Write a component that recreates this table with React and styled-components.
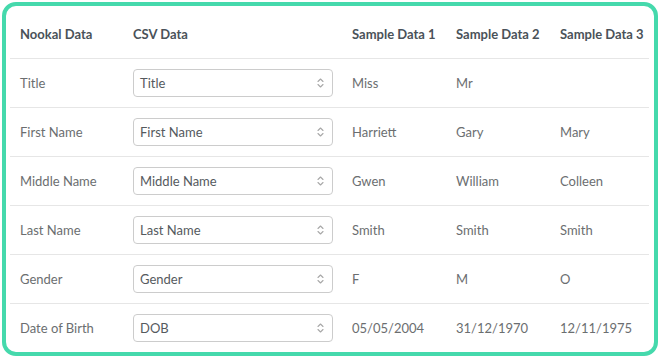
import React from "react";
import styled, { createGlobalStyle } from "styled-components";

const Global = createGlobalStyle`
  html, body { margin: 0; padding: 0; background: #ffffff; }
  body { font-family: Lato, "Open Sans", sans-serif; }
`;

const Page = styled.div`
  padding: 2px;
  width: 662px;
  height: 360px;
  box-sizing: border-box;
`;

const Card = styled.div`
  width: 656px;
  height: 354px;
  box-sizing: border-box;
  border: 4px solid #45d9ac;
  border-radius: 14px;
  padding: 4px 5px 0 4px;
  background: #fff;
  overflow: hidden;
`;

const Table = styled.table`
  width: 639px;
  border-collapse: collapse;
  table-layout: fixed;
  font-size: 13px;
`;

const Th = styled.th`
  height: 48px;
  padding: 0 10px;
  text-align: left;
  font-weight: 700;
  color: #4a5259;
  border-bottom: 1px solid #e6e6e6;
  white-space: nowrap;
`;

const Row = styled.tr`
  & > td {
    border-bottom: 1px solid #e6e6e6;
  }
  &:last-child > td {
    border-bottom: none;
  }
`;

const Td = styled.td`
  height: 48px;
  padding: 0 10px;
  color: #6b6e70;
  white-space: nowrap;
  vertical-align: middle;
`;

const SelectBox = styled.div`
  width: 200px;
  height: 28px;
  box-sizing: border-box;
  border: 1px solid #cccccc;
  border-radius: 4px;
  display: flex;
  align-items: center;
  justify-content: space-between;
  padding: 0 8px 0 6px;
  color: #555a5e;
  font-size: 13px;
  background: #fff;
`;

const Chevrons = () => (
  <svg width="7" height="10" viewBox="0 0 7 10" fill="none" stroke="#a8a8a8" strokeWidth="1.1" strokeLinecap="round" strokeLinejoin="round">
    <path d="M1 3.5 L3.5 1 L6 3.5" />
    <path d="M1 6.5 L3.5 9 L6 6.5" />
  </svg>
);

const rows = [
  ["Title", "Title", "Miss", "Mr", ""],
  ["First Name", "First Name", "Harriett", "Gary", "Mary"],
  ["Middle Name", "Middle Name", "Gwen", "William", "Colleen"],
  ["Last Name", "Last Name", "Smith", "Smith", "Smith"],
  ["Gender", "Gender", "F", "M", "O"],
  ["Date of Birth", "DOB", "05/05/2004", "31/12/1970", "12/11/1975"],
];

export default function App() {
  return (
    <Page>
      <Global />
      <Card>
        <Table>
          <colgroup>
            <col style={{ width: 113 }} />
            <col style={{ width: 219 }} />
            <col style={{ width: 104 }} />
            <col style={{ width: 104 }} />
            <col style={{ width: 99 }} />
          </colgroup>
          <thead>
            <tr>
              <Th>Nookal Data</Th>
              <Th>CSV Data</Th>
              <Th>Sample Data 1</Th>
              <Th>Sample Data 2</Th>
              <Th>Sample Data 3</Th>
            </tr>
          </thead>
          <tbody>
            {rows.map((r) => (
              <Row key={r[0]}>
                <Td>{r[0]}</Td>
                <Td>
                  <SelectBox>
                    <span>{r[1]}</span>
                    <Chevrons />
                  </SelectBox>
                </Td>
                <Td>{r[2]}</Td>
                <Td>{r[3]}</Td>
                <Td>{r[4]}</Td>
              </Row>
            ))}
          </tbody>
        </Table>
      </Card>
    </Page>
  );
}
